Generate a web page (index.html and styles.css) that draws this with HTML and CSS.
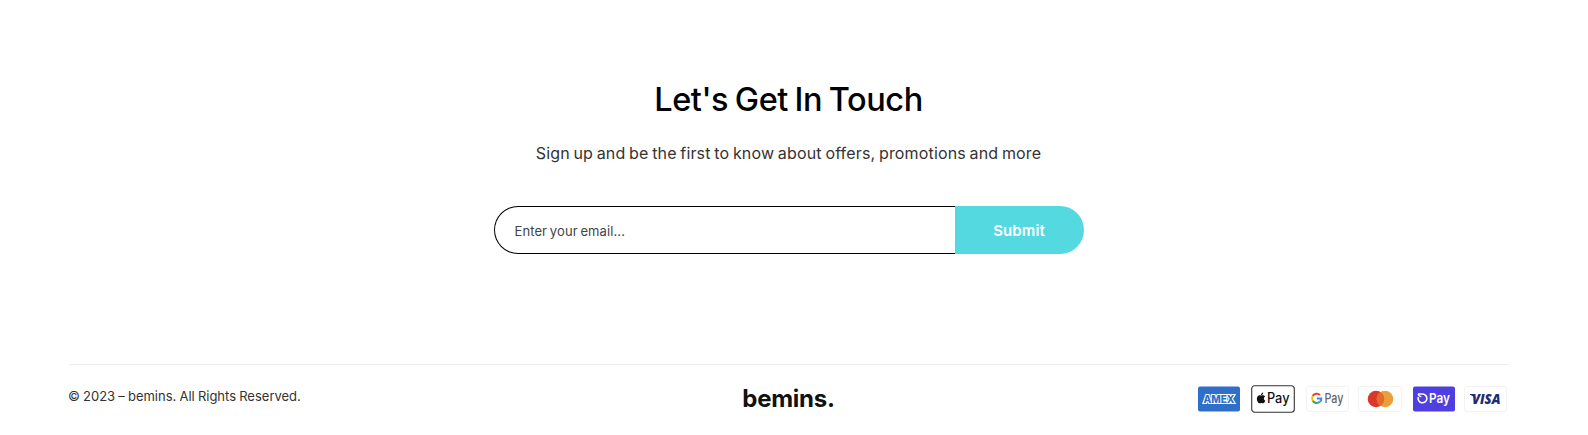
FILE: index.html
```html
<!DOCTYPE html>
<html lang="en">
<head>
<meta charset="utf-8">
<title>bemins.</title>
<link rel="stylesheet" href="styles.css">
</head>
<body>
<div class="page">
<section class="newsletter">
  <h2 class="title">Let's Get In Touch</h2>
  <p class="subtitle">Sign up and be the first to know about offers, promotions and more</p>
  <form class="form">
    <input class="email" type="email" placeholder="Enter your email..." aria-label="Email">
    <button class="submit" type="button">Submit</button>
  </form>
</section>
<footer class="footer">
  <p class="copyright"><span>© 2023 – bemins. All Rights Reserved.</span></p>
  <div class="logo">bemins.</div>
  <div class="payments">
    <svg class="card" width="42" height="28" viewBox="0 0 42 28">
      <rect x="0" y="1.5" width="42" height="25" rx="2" fill="#2f6fc9"/>
      <path d="M4 18.800 8.500 9.500H11L9 18.800ZM32 9.500H38L34.800 14 37.500 18.800H32Z" fill="#fff"/>
      <text x="5.500" y="17.800" textLength="31" lengthAdjust="spacingAndGlyphs" class="amex">AMEX</text>
    </svg>
    <svg class="card apple" width="44" height="28" viewBox="0 0 44 28">
      <rect x=".7" y=".7" width="42.600" height="26.600" rx="3" fill="#fff" stroke="#333" stroke-width="1.100"/>
      <path d="M10.200 10.700c-1-.5-2-.6-2.900 0-1.700 1-1.800 3.700-.8 5.700.5 1 1.200 1.900 2 1.900.7 0 1-.4 1.800-.4s1.100.4 1.800.4c1 0 1.800-1.500 2.200-2.600-1.800-.8-2-3.200-.2-4.200-.8-1.100-2.400-1.500-3.900-.8ZM10 10.200c-.1-1.300.9-2.500 2.200-2.700.2 1.300-.9 2.700-2.200 2.700Z" fill="#111"/>
      <text x="16" y="18.300" textLength="22.500" lengthAdjust="spacingAndGlyphs" class="pay dark">Pay</text>
    </svg>
    <svg class="card gpay" width="43" height="28" viewBox="0 0 43 28">
      <rect x=".5" y="1.500" width="42" height="25" rx="2.500" fill="#fff" stroke="#f3f3f3"/>
      <g fill="none" stroke-width="2">
        <path d="M14 10A4.700 4.700 0 0 0 6.700 11" stroke="#e94235"/>
        <path d="M6.700 11A4.700 4.700 0 0 0 6.800 15.900" stroke="#fabb05"/>
        <path d="M6.800 15.900A4.700 4.700 0 0 0 13.800 16.800" stroke="#34a853"/>
        <path d="M10.800 13.500H15.300Q15.300 15.600 13.800 16.800" stroke="#4285f4"/>
      </g>
      <text x="18.500" y="18" textLength="19" lengthAdjust="spacingAndGlyphs" class="pay gray">Pay</text>
    </svg>
    <svg class="card mastercard" width="44" height="28" viewBox="0 0 44 28">
      <rect x=".5" y="1.500" width="43" height="25" rx="2.500" fill="#fff" stroke="#f3f3f3"/>
      <circle cx="18" cy="14" r="8.300" fill="#d9382b"/>
      <circle cx="27" cy="14" r="8.300" fill="#eaa03a"/>
      <path d="M22.500 7a8.300 8.300 0 0 1 0 14 8.300 8.300 0 0 1 0-14Z" fill="#e66a2b"/>
    </svg>
    <svg class="card shop" width="42" height="28" viewBox="0 0 42 28">
      <rect x="0" y="1.500" width="42" height="25" rx="2" fill="#4f3fe0"/>
      <path d="M5 9H9.300a4.400 4.400 0 1 1-4 3" fill="none" stroke="#fff" stroke-width="1.600"/>
      <path d="M5 9Q5.500 11 8.300 11.800" fill="none" stroke="#fff" stroke-width="1.300"/>
      <text x="16" y="18.200" textLength="21" lengthAdjust="spacingAndGlyphs" class="pay white">Pay</text>
    </svg>
    <svg class="card visa" width="43" height="28" viewBox="0 0 43 28">
      <rect x=".5" y="1.500" width="42" height="25" rx="2.500" fill="#fff" stroke="#f3f3f3"/>
      <path d="M6 9H10.500L12 14Q10 11 6 9.700Z" fill="#202b73"/>
      <text x="8" y="18.500" textLength="28.500" lengthAdjust="spacingAndGlyphs" class="visa-name">VISA</text>
    </svg>
  </div>
</footer>
</div>
</body>
</html>
```
FILE: styles.css
```css
* { box-sizing: border-box; }
body {
  margin: 0;
  background: #fff;
  font-family: Inter, "Open Sans", sans-serif;
  color: #333;
}
.page { width: 1441px; margin-left: 69px; }
.newsletter {
  display: flex;
  flex-direction: column;
  align-items: center;
  height: 364px;
  padding: 80px 2px 0 0;
}
.title {
  margin: 0;
  font-size: 32.5px;
  font-weight: 500;
  line-height: 40px;
  letter-spacing: -.45px;
  word-spacing: -1.5px;
  white-space: nowrap;
  color: #000;
}
.subtitle {
  margin: 21px 0 0;
  font-size: 16px;
  line-height: 24px;
  letter-spacing: .16px;
  word-spacing: -1px;
  white-space: nowrap;
}
.form { display: flex; width: 590px; height: 48px; margin-top: 41px; }
.email {
  flex: 1;
  min-width: 0;
  padding: 2px 20px 0;
  border: 1px solid #000;
  border-right: 0;
  border-radius: 24px 0 0 24px;
  outline: 0;
  background: #fff;
  font: 13px Inter, sans-serif;
  letter-spacing: .1px;
  word-spacing: -1px;
}
.email::placeholder { color: #444; opacity: 1; }
.submit {
  width: 129px;
  padding: 0;
  border: 0;
  border-radius: 0 24px 24px 0;
  background: #55d9e0;
  color: #fff;
  font: 600 15px Inter, sans-serif;
  letter-spacing: .1px;
}
.footer {
  display: grid;
  grid-template-columns: 1fr auto 1fr;
  height: 71px;
  border-top: 1px solid #eee;
}
.copyright {
  margin: 21px 0 0 -1px;
  font-size: 13px;
  line-height: 20px;
  letter-spacing: 0;
  word-spacing: -.5px;
}
.logo {
  margin: 18px 2px 0 0;
  font-size: 24px;
  font-weight: 700;
  line-height: 32px;
  letter-spacing: -.25px;
  color: #111;
}
.payments {
  display: flex;
  justify-content: flex-end;
  padding: 20px 3px 0 0;
}
.card { display: block; flex: none; }
.apple, .gpay, .shop { margin-left: 11px; }
.mastercard { margin-left: 9px; }
.visa { margin-left: 9px; }
.pay { font: 500 13px Inter, sans-serif; }
.dark { fill: #111; font-size: 14px; }
.gray { fill: #666; }
.white { fill: #fff; font-weight: 600; }
.amex {
  font: 800 10px Inter, sans-serif;
  fill: #2f6fc9;
  stroke: #fff;
  stroke-width: 2px;
  paint-order: stroke;
}
.visa-name { font: italic 800 13.500px "Open Sans", sans-serif; fill: #202b73; }
```
